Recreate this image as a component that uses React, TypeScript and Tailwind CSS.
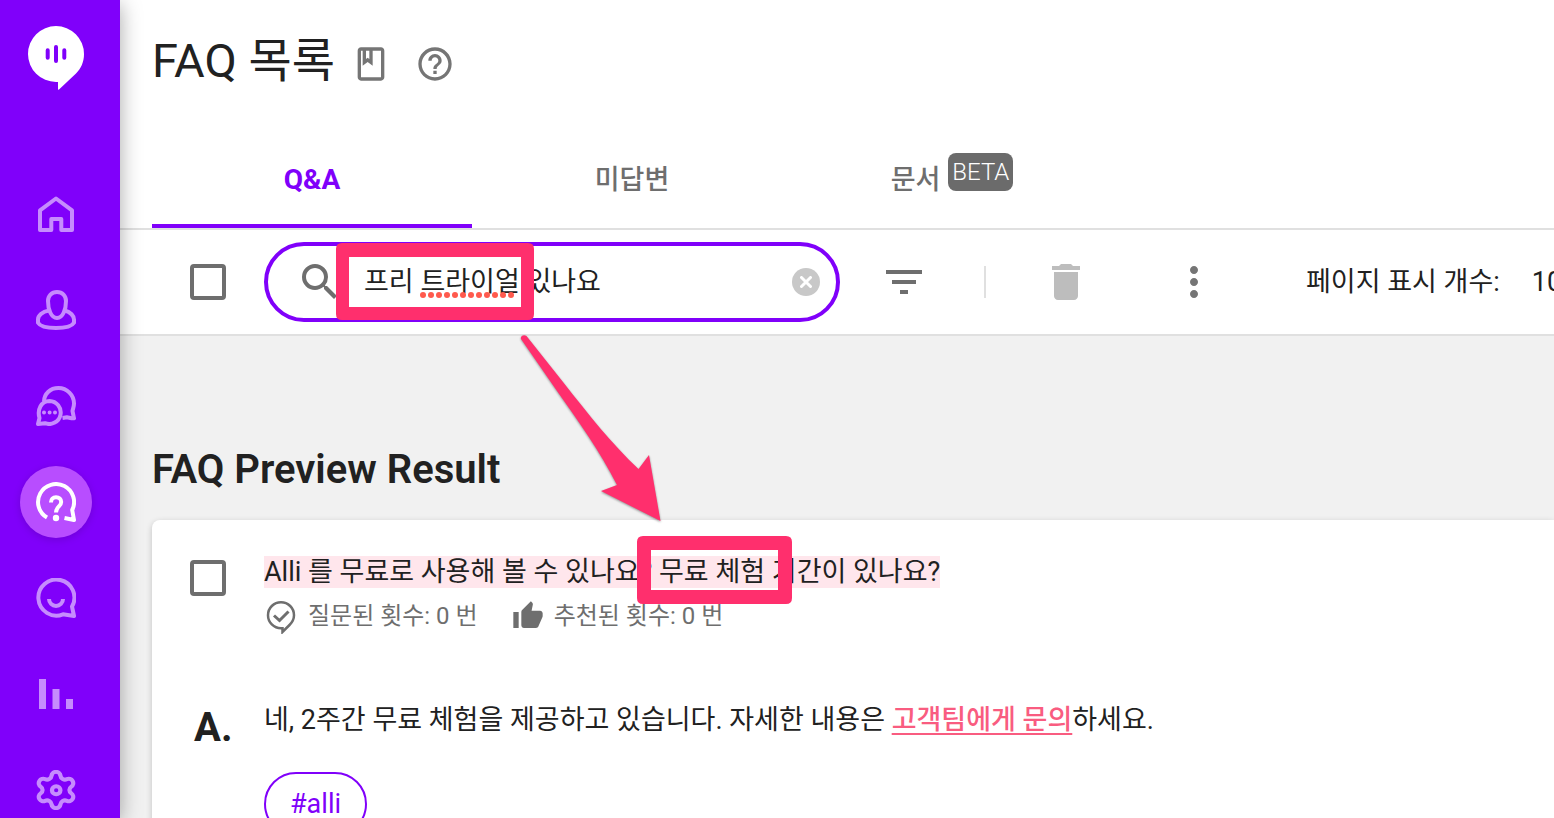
import React, { useState } from "react";
import {
  MdDelete,
  MdFilterList,
  MdHelpOutline,
  MdMoreVert,
  MdOutlineClass,
  MdSearch,
  MdThumbUp,
} from "react-icons/md";

const Logo = () => (
  <svg className="h-16 w-14" viewBox="0 0 56 64" fill="none">
    <path
      d="M28 0a28 28 0 0 1 28 28c0 8-3 14.500-8 19.500L31 63.500q-1 .8-1-.5v-7h-2A28 28 0 0 1 28 0z"
      fill="#fff"
    />
    <path
      d="M19.700 24.300v7.500M28 21v14M36.300 24.300v7.500"
      stroke="#8000fa"
      strokeWidth="4"
      strokeLinecap="round"
    />
  </svg>
);

const NavSvg = ({ children }: { children: React.ReactNode }) => (
  <svg
    className="size-10"
    viewBox="0 0 40 40"
    fill="none"
    stroke="currentColor"
    strokeWidth="4"
    strokeLinejoin="round"
  >
    {children}
  </svg>
);

const navItems = [
  {
    label: "홈",
    icon: <path d="M4 16.300 20 4.500l16 11.800V36H25.300V25H15.300v11H4z" />,
  },
  {
    label: "고객",
    icon: (
      <>
        <path d="M21 2c-5.500 0-9 4-9 9 0 8 3 17 9 17s9-9 9-17c0-5-3.500-9-9-9z" />
        <path d="M13 20.500C6 21.500 2 26 2 29.500v3.200C4 36 11 38 20 38s16-2 18-5.300v-3.200c0-3.500-3.500-7.500-9-9" />
      </>
    ),
  },
  {
    label: "대화",
    icon: (
      <>
        <path d="M8 15.500C8 8 14 2 22.500 2S38 9 38 17.500c0 3-1 5-1.500 7.500L38 32.300c-3 .2-5-.8-7-1l-4.500.7" />
        <path d="M13.500 15A11.500 11.500 0 1 1 9 37.200L2 38l1.500-6C1 24 5 15 13.500 15z" />
        <path d="M8 26.500h.01M13.600 26.500h.01M19 26.500h.01" strokeLinecap="round" />
      </>
    ),
  },
  {
    label: "FAQ",
    icon: (
      <>
        <path d="M11 35.600A18 18 0 1 1 36.200 28L38 38l-9.500-2" />
        <path d="M15 20.500v-.3c0-3 2-5 5-5s5.200 2 5.200 4.800c0 4.500-5.200 4.500-5.200 10.500" />
        <circle cx="20" cy="36" r="3.200" fill="currentColor" stroke="none" />
      </>
    ),
  },
  {
    label: "학습",
    icon: (
      <>
        <path d="M27 36.300A18 18 0 1 1 36 28.500L38 38z" />
        <path d="M13 21a7 7 0 0 0 14 0" />
      </>
    ),
  },
  {
    label: "통계",
    icon: (
      <path
        d="M3 5h7v30H3zM16.500 15h7v20h-7zM30 25h7v10h-7z"
        fill="currentColor"
        stroke="none"
      />
    ),
  },
  {
    label: "설정",
    icon: (
      <svg viewBox="1.600 1 20.800 22" preserveAspectRatio="none" strokeWidth="2.200">
        <path d="M9.671 4.136a2.340 2.340 0 0 1 4.659 0 2.340 2.340 0 0 0 3.319 1.915 2.340 2.340 0 0 1 2.330 4.033 2.340 2.340 0 0 0 0 3.831 2.340 2.340 0 0 1-2.330 4.033 2.340 2.340 0 0 0-3.319 1.915 2.340 2.340 0 0 1-4.659 0 2.340 2.340 0 0 0-3.320-1.915 2.340 2.340 0 0 1-2.330-4.033 2.340 2.340 0 0 0 0-3.831A2.340 2.340 0 0 1 6.350 6.051a2.340 2.340 0 0 0 3.319-1.915" />
        <circle cx="12.100" cy="12.100" r="2.200" />
      </svg>
    ),
  },
];

const Sidebar = () => (
  <nav className="relative z-10 flex w-[120px] shrink-0 flex-col items-center bg-[#8000fa] pr-2 shadow-[0_4px_20px_rgba(0,0,0,0.35)]">
    <a href="#" aria-label="Alli" className="mt-[26px] mb-[88px]">
      <Logo />
    </a>
    <div className="flex flex-col gap-6">
      {navItems.map((item) => (
        <a
          key={item.label}
          href="#"
          aria-label={item.label}
          className={`flex size-[72px] items-center justify-center rounded-full ${
            item.label === "FAQ"
              ? "bg-[#b84dff] text-white shadow-[0_2px_8px_rgba(0,0,0,0.15)]"
              : "text-[#c68cfd]"
          }`}
        >
          <NavSvg>{item.icon}</NavSvg>
        </a>
      ))}
    </div>
  </nav>
);

const Checkbox = ({ label }: { label: string }) => (
  <input
    type="checkbox"
    aria-label={label}
    className="size-9 shrink-0 appearance-none rounded-sm border-4 border-[#6e6e6e] bg-white checked:bg-[#8000fa]"
  />
);

const SearchBox = () => {
  const [query, setQuery] = useState("프리 트라이얼 있나요");

  return (
    <div className="relative ml-[38px] flex h-20 w-[576px] shrink-0 items-center rounded-full border-4 border-[#8000fa] bg-white pr-4 pl-7">
      <MdSearch className="size-12 shrink-0 text-[#6e6e6e]" />
      <input
        type="text"
        aria-label="FAQ 검색"
        spellCheck={false}
        value={query}
        onChange={(e) => setQuery(e.target.value)}
        className="ml-5 min-w-0 flex-1 text-[27px] leading-10 outline-none"
      />
      {/* spelling mark under 트라이얼 */}
      {query.includes("트라이얼") && (
        <svg className="absolute top-[46px] left-[152px] h-1.5 w-24" viewBox="0 0 96 6">
          {Array.from({ length: 12 }, (_, i) => (
            <circle key={i} cx={i * 8 + 3} cy="3" r="3" fill="#ff5a4d" />
          ))}
        </svg>
      )}
      <button
        type="button"
        aria-label="지우기"
        onClick={() => setQuery("")}
        className="flex size-7 items-center justify-center rounded-full bg-[#c8c8c8]"
      >
        <svg className="size-3" viewBox="0 0 12 12" stroke="#fff" strokeWidth="3" strokeLinecap="round">
          <path d="M1.500 1.500l9 9M10.500 1.500l-9 9" />
        </svg>
      </button>
    </div>
  );
};

const Toolbar = () => (
  <div className="flex shrink-0 items-center overflow-hidden border-b-2 border-[#e0e0e0] bg-white py-3 pl-[70px]">
    <Checkbox label="전체 선택" />
    <SearchBox />
    <button type="button" aria-label="필터" className="ml-10 text-[#6e6e6e]">
      <MdFilterList className="size-12" />
    </button>
    <div className="mx-14 h-8 w-0.5 shrink-0 bg-[#e0e0e0]" />
    <button type="button" aria-label="삭제" className="text-[#bdbdbd]">
      <MdDelete className="size-12" />
    </button>
    <button type="button" aria-label="더보기" className="ml-20 text-[#757575]">
      <MdMoreVert className="size-12" />
    </button>
    <label htmlFor="page-size" className="ml-[88px] shrink-0 text-[27px] leading-10">
      페이지 표시 개수:
    </label>
    <select
      id="page-size"
      className="ml-8 w-24 shrink-0 appearance-none text-[27px] leading-10"
      defaultValue="10"
    >
      <option>10</option>
      <option>20</option>
      <option>50</option>
    </select>
  </div>
);

const CheckBubble = () => (
  <svg className="size-9 text-[#6e6e6e]" viewBox="0 0 36 36" fill="none" stroke="currentColor" strokeWidth="2.500">
    <path d="M17 4.200a13 13 0 0 1 13 13c0 4-2 7.300-4.500 9.800L18.500 34v-3.800H17a13 13 0 0 1 0-26z" />
    <path d="M10 17.500l5.500 5 9-9" strokeWidth="3" />
  </svg>
);

const FaqCard = () => (
  <article className="ml-8 flex-1 rounded-tl-lg bg-white pt-8 pl-[38px] shadow-[0_2px_6px_rgba(0,0,0,0.2)]">
    <div className="flex gap-[38px]">
      <div className="pt-2">
        <Checkbox label="질문 선택" />
      </div>
      <div>
        <h3 className="flex text-[27px] leading-8">
          <mark className="mt-1 h-8 bg-[#ffe6ec] whitespace-nowrap text-[#212121]">
            Alli 를 무료로 사용해 볼 수 있나요? 무료 체험 기간이 있나요?
          </mark>
        </h3>
        <div className="mt-2 flex h-10 items-center text-2xl text-[#6e6e6e]">
          <CheckBubble />
          <span className="ml-2">질문된 횟수: 0 번</span>
          <MdThumbUp className="ml-[34px] size-8" />
          <span className="ml-2.5">추천된 횟수: 0 번</span>
        </div>
      </div>
    </div>
    <div className="mt-16 flex">
      <div className="w-[74px] shrink-0 pt-2 pl-1 text-[40px] leading-10 font-bold">A.</div>
      <div>
        <p className="text-[27px] leading-10 whitespace-nowrap">
          네, 2주간 무료 체험을 제공하고 있습니다. 자세한 내용은{" "}
          <a href="#" className="font-medium text-[#f95c80] underline decoration-2 underline-offset-4">
            고객팀에게 문의
          </a>
          하세요.
        </p>
        <button
          type="button"
          className="mt-8 h-16 rounded-full border-2 border-[#8000fa] px-6 text-[27px] text-[#8000fa]"
        >
          #alli
        </button>
      </div>
    </div>
  </article>
);

// Highlight boxes and the arrow between them, drawn over the page
const Annotations = () => (
  <svg
    className="pointer-events-none absolute top-0 left-0 h-[620px] w-[720px]"
    viewBox="120 0 720 620"
    fill="none"
    aria-hidden="true"
  >
    <path
      d="M336 249q0-6 6-6h186q6 0 6 6v65q0 6-6 6H342q-6 0-6-6zM349 257v50h172v-50z"
      fill="#ff2f6d"
      fillRule="evenodd"
    />
    <path
      d="M637 542q0-6 6-6h143q6 0 6 6v56q0 6-6 6H643q-6 0-6-6zM651 550v40h127v-40z"
      fill="#ff2f6d"
      fillRule="evenodd"
    />
    <path
      className="drop-shadow-[0_1px_1px_rgba(0,0,0,0.4)]"
      d="M521 339c-1-3 3-5 5.500-3L563 382C589 415 611 443 638.500 469L649 455l11.500 66L601 491l16-6C600 451 578 421 557 391z"
      fill="#ff2f6d"
    />
  </svg>
);

const App = () => {
  const [tab, setTab] = useState(0);
  const tabs = ["Q&A", "미답변", "문서"];

  return (
    <div className="flex h-screen overflow-hidden bg-[#f1f1f1] font-['Roboto','Noto_Sans_CJK_KR',sans-serif] text-[#212121]">
      <Sidebar />
      <main className="relative flex min-w-0 flex-1 flex-col overflow-hidden">
        <header className="shrink-0 border-b-2 border-[#e0e0e0] bg-white pl-8">
          <div className="flex h-32 items-center">
            <h1 className="pb-1.5 text-[47px] leading-[60px]">FAQ 목록</h1>
            <button type="button" aria-label="가이드" className="ml-4 text-[#757575]">
              <MdOutlineClass className="size-10" />
            </button>
            <button type="button" aria-label="도움말" className="ml-6 text-[#757575]">
              <MdHelpOutline className="size-10" />
            </button>
          </div>
          <div role="tablist" className="flex">
            {tabs.map((name, i) => (
              <button
                key={name}
                type="button"
                role="tab"
                aria-selected={tab === i}
                onClick={() => setTab(i)}
                className={`flex h-[100px] w-80 items-center justify-center gap-2 border-b-4 pt-2 ${
                  tab === i
                    ? "border-[#8000fa] text-[28px] font-bold text-[#8000fa]"
                    : "border-transparent text-[27px] font-medium text-[#6e6e6e]"
                }`}
              >
                {name}
                {i === 2 && (
                  <span className="mb-4 rounded-lg bg-[#6b6b6b] px-1 text-2xl leading-[38px] font-light text-white">
                    BETA
                  </span>
                )}
              </button>
            ))}
          </div>
        </header>
        <Toolbar />
        <h2 className="mt-28 mb-7 ml-8 text-[40px] leading-[44px] font-semibold">
          FAQ Preview Result
        </h2>
        <FaqCard />
        <Annotations />
      </main>
    </div>
  );
};

export default App;
